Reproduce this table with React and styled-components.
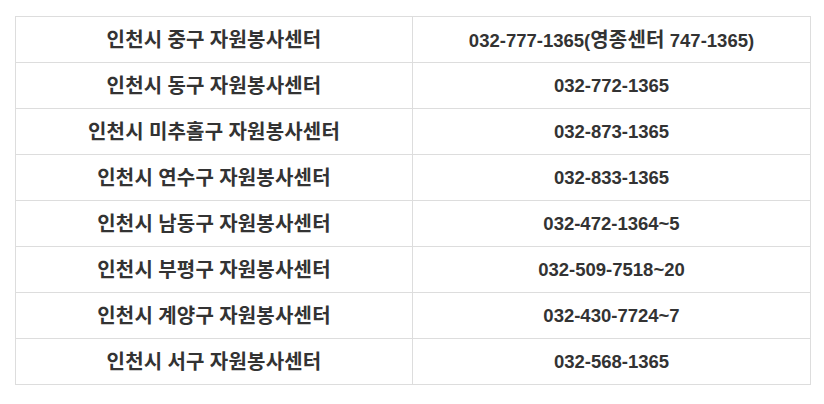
import React from 'react';
import styled, { createGlobalStyle } from 'styled-components';

const GlobalStyle = createGlobalStyle`
  body {
    margin: 0;
    background: #fff;
    font-family: "Liberation Sans", "Noto Sans CJK KR", sans-serif;
  }
`;

const Page = styled.div`
  padding: 16px 14px 0 15px;
`;

const Table = styled.table`
  width: 793px;
  border-collapse: collapse;
  table-layout: fixed;
  color: #333;
`;

const Cell = styled.td`
  width: ${props => props.width}px;
  height: 45px;
  padding: 0;
  border: 1px solid #ddd;
  text-align: center;
  vertical-align: middle;
  font-size: 18.5px;
  font-weight: bold;
  line-height: 20px;
  white-space: nowrap;
`;

// hangul in the shot is set a touch larger than the digits
const Hangul = styled.span`
  font-family: "Noto Sans CJK KR", sans-serif;
  font-size: 20px;
  letter-spacing: 0.2px;
`;

const withHangul = text =>
  text.split(/([가-힣]+)/).map((part, i) =>
    /[가-힣]/.test(part) ? <Hangul key={i}>{part}</Hangul> : part
  );

const centers = [
  ['인천시 중구 자원봉사센터', '032-777-1365(영종센터 747-1365)'],
  ['인천시 동구 자원봉사센터', '032-772-1365'],
  ['인천시 미추홀구 자원봉사센터', '032-873-1365'],
  ['인천시 연수구 자원봉사센터', '032-833-1365'],
  ['인천시 남동구 자원봉사센터', '032-472-1364~5'],
  ['인천시 부평구 자원봉사센터', '032-509-7518~20'],
  ['인천시 계양구 자원봉사센터', '032-430-7724~7'],
  ['인천시 서구 자원봉사센터', '032-568-1365'],
];

const App = () => (
  <Page>
    <GlobalStyle />
    <Table>
      <tbody>
        {centers.map(([name, phone]) => (
          <tr key={name}>
            <Cell width={396}>{withHangul(name)}</Cell>
            <Cell width={397}>{withHangul(phone)}</Cell>
          </tr>
        ))}
      </tbody>
    </Table>
  </Page>
);

export default App;
